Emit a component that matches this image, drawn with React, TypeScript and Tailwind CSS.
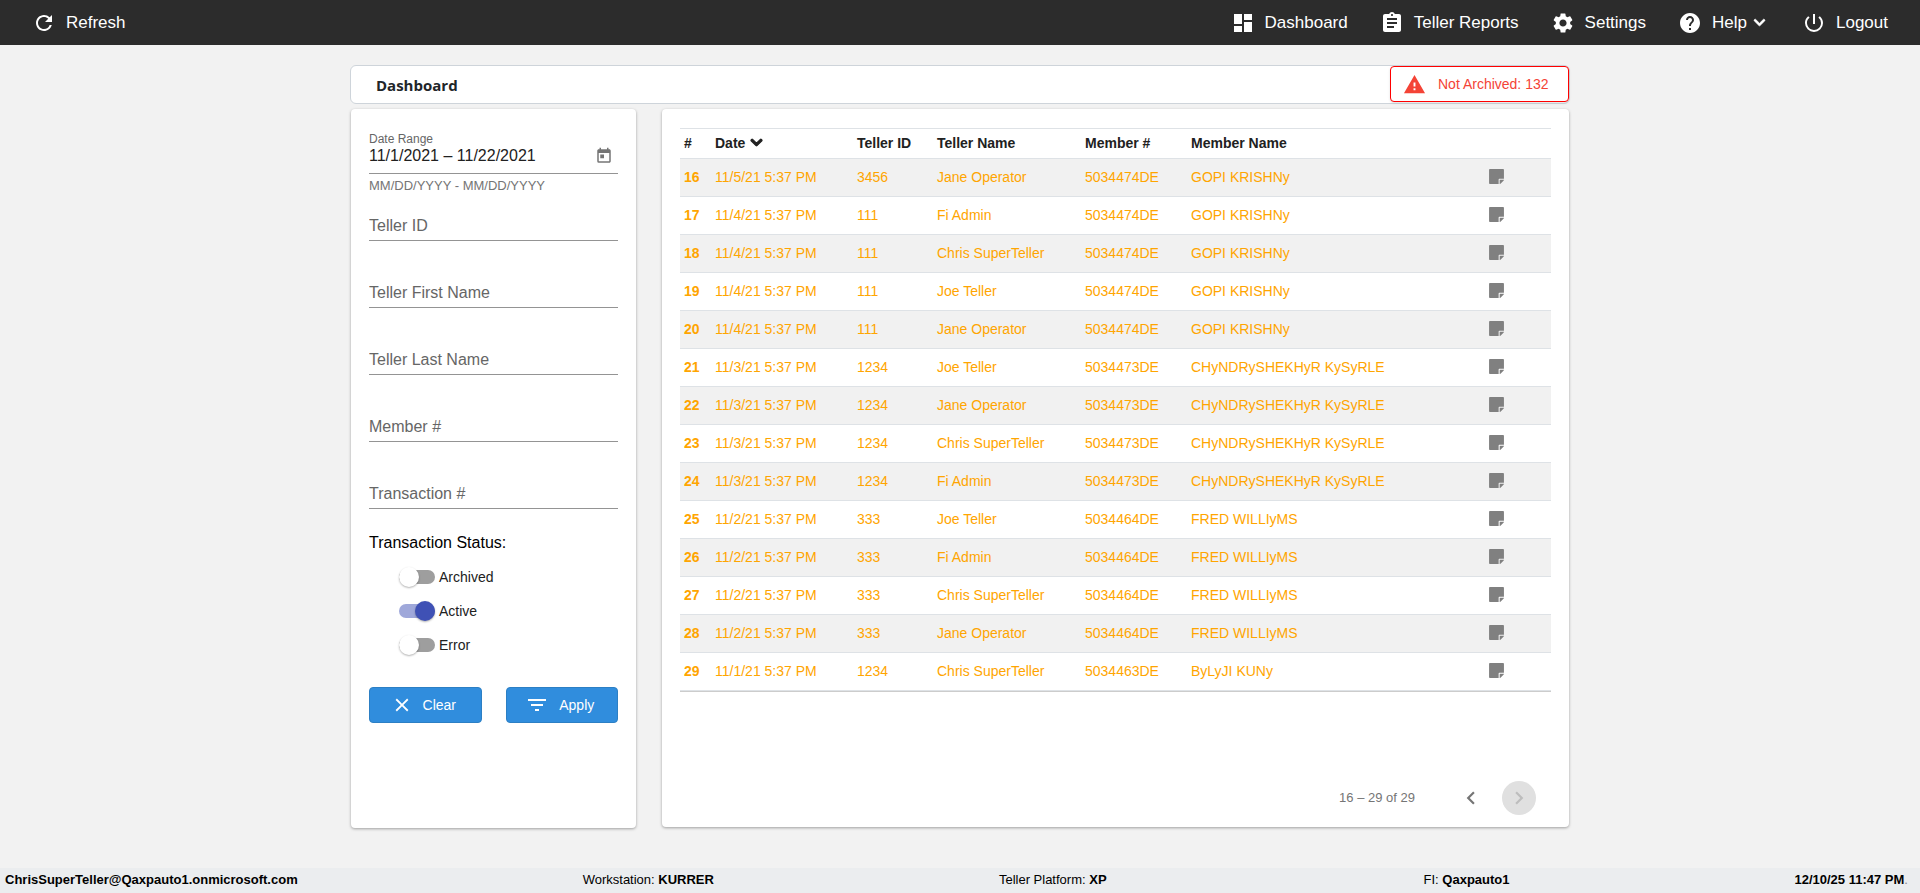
import { useState } from 'react';
import type { ReactNode } from 'react';
import { FaChevronDown, FaStickyNote } from 'react-icons/fa';
import {
  MdAssignment,
  MdChevronLeft,
  MdChevronRight,
  MdClose,
  MdDashboard,
  MdFilterList,
  MdHelp,
  MdPowerSettingsNew,
  MdRefresh,
  MdSettings,
  MdToday,
  MdWarning,
} from 'react-icons/md';

interface Transaction {
  id: number;
  date: string;
  tellerId: string;
  tellerName: string;
  memberNumber: string;
  memberName: string;
}

const transactions: Transaction[] = [
  { id: 16, date: '11/5/21 5:37 PM', tellerId: '3456', tellerName: 'Jane Operator', memberNumber: '5034474DE', memberName: 'GOPI KRISHNy' },
  { id: 17, date: '11/4/21 5:37 PM', tellerId: '111', tellerName: 'Fi Admin', memberNumber: '5034474DE', memberName: 'GOPI KRISHNy' },
  { id: 18, date: '11/4/21 5:37 PM', tellerId: '111', tellerName: 'Chris SuperTeller', memberNumber: '5034474DE', memberName: 'GOPI KRISHNy' },
  { id: 19, date: '11/4/21 5:37 PM', tellerId: '111', tellerName: 'Joe Teller', memberNumber: '5034474DE', memberName: 'GOPI KRISHNy' },
  { id: 20, date: '11/4/21 5:37 PM', tellerId: '111', tellerName: 'Jane Operator', memberNumber: '5034474DE', memberName: 'GOPI KRISHNy' },
  { id: 21, date: '11/3/21 5:37 PM', tellerId: '1234', tellerName: 'Joe Teller', memberNumber: '5034473DE', memberName: 'CHyNDRySHEKHyR KySyRLE' },
  { id: 22, date: '11/3/21 5:37 PM', tellerId: '1234', tellerName: 'Jane Operator', memberNumber: '5034473DE', memberName: 'CHyNDRySHEKHyR KySyRLE' },
  { id: 23, date: '11/3/21 5:37 PM', tellerId: '1234', tellerName: 'Chris SuperTeller', memberNumber: '5034473DE', memberName: 'CHyNDRySHEKHyR KySyRLE' },
  { id: 24, date: '11/3/21 5:37 PM', tellerId: '1234', tellerName: 'Fi Admin', memberNumber: '5034473DE', memberName: 'CHyNDRySHEKHyR KySyRLE' },
  { id: 25, date: '11/2/21 5:37 PM', tellerId: '333', tellerName: 'Joe Teller', memberNumber: '5034464DE', memberName: 'FRED WILLIyMS' },
  { id: 26, date: '11/2/21 5:37 PM', tellerId: '333', tellerName: 'Fi Admin', memberNumber: '5034464DE', memberName: 'FRED WILLIyMS' },
  { id: 27, date: '11/2/21 5:37 PM', tellerId: '333', tellerName: 'Chris SuperTeller', memberNumber: '5034464DE', memberName: 'FRED WILLIyMS' },
  { id: 28, date: '11/2/21 5:37 PM', tellerId: '333', tellerName: 'Jane Operator', memberNumber: '5034464DE', memberName: 'FRED WILLIyMS' },
  { id: 29, date: '11/1/21 5:37 PM', tellerId: '1234', tellerName: 'Chris SuperTeller', memberNumber: '5034463DE', memberName: 'ByLyJI KUNy' },
];

const textFilters = ['Teller ID', 'Teller First Name', 'Teller Last Name', 'Member #', 'Transaction #'];

function NavButton({ icon, children }: { icon: ReactNode; children: ReactNode }) {
  return (
    <button type="button" className="flex items-center gap-2.5 text-[17px] leading-6 text-white">
      {icon}
      <span className="flex items-center gap-1.5">{children}</span>
    </button>
  );
}

function TopBar() {
  return (
    <header className="flex h-[45px] items-center justify-between bg-[#2c2c2c] px-8">
      <NavButton icon={<MdRefresh size={24} />}>Refresh</NavButton>
      <div className="flex items-center gap-9">
        <nav className="flex items-center gap-8">
          <NavButton icon={<MdDashboard size={24} />}>Dashboard</NavButton>
          <NavButton icon={<MdAssignment size={24} />}>Teller Reports</NavButton>
          <NavButton icon={<MdSettings size={24} />}>Settings</NavButton>
          <NavButton icon={<MdHelp size={24} />}>
            Help <FaChevronDown size={13} strokeWidth={24} className="overflow-visible" />
          </NavButton>
        </nav>
        <NavButton icon={<MdPowerSettingsNew size={24} />}>Logout</NavButton>
      </div>
    </header>
  );
}

function StatusToggle({ label, defaultChecked = false }: { label: string; defaultChecked?: boolean }) {
  return (
    <label className="flex h-[34px] items-center gap-1 text-sm text-[#212121]">
      <input
        type="checkbox"
        defaultChecked={defaultChecked}
        className="h-3.5 w-9 appearance-none rounded-full bg-[#9e9e9e] before:-mt-[3px] before:block before:size-5 before:rounded-full before:bg-white before:shadow-[0_1px_2px_rgba(0,0,0,0.3)] checked:bg-[#9fa8da] checked:before:ml-4 checked:before:bg-[#3f51b5]"
      />
      {label}
    </label>
  );
}

function FilterPanel() {
  const [dateRange, setDateRange] = useState('11/1/2021 – 11/22/2021');

  return (
    <form className="w-[285px] shrink-0 rounded bg-white px-[18px] pt-[21px] shadow-[0_1px_3px_rgba(0,0,0,0.35)]">
      <label htmlFor="date-range" className="block pt-0.5 text-xs leading-[14px] text-[#666]">
        Date Range
      </label>
      <div className="flex h-7 items-start border-b border-[#949494]">
        <input
          id="date-range"
          value={dateRange}
          onChange={(e) => setDateRange(e.target.value)}
          className="min-w-0 flex-1 text-base leading-5 text-[#212121] outline-none"
        />
        <button type="button" aria-label="Open calendar" className="mt-px mr-[5px] text-[#757575]">
          <MdToday size={18} />
        </button>
      </div>
      <p className="pt-1 text-[13px] leading-4 text-[#757575]">MM/DD/YYYY - MM/DD/YYYY</p>

      <div className="mt-[18px] flex flex-col gap-[38px]">
        {textFilters.map((label) => (
          <input
            key={label}
            aria-label={label}
            placeholder={label}
            className="h-[29px] w-full border-b border-[#949494] text-base leading-6 outline-none placeholder:text-[#666]"
          />
        ))}
      </div>

      <fieldset className="mt-[22px]">
        <legend className="mb-[5px] text-base leading-6 text-black">Transaction Status:</legend>
        <div className="pl-[30px]">
          <StatusToggle label="Archived" />
          <StatusToggle label="Active" defaultChecked />
          <StatusToggle label="Error" />
        </div>
      </fieldset>

      <div className="mt-[25px] grid grid-cols-2 gap-6">
        <button type="reset" className="flex h-9 items-center justify-center gap-2.5 rounded-sm border border-[#2c7fc4] bg-[#308ddd] pr-1 text-sm text-white">
          <MdClose size={22} /> Clear
        </button>
        <button type="button" className="flex h-9 items-center justify-center gap-2.5 rounded-sm border border-[#2c7fc4] bg-[#308ddd] pr-1 text-sm text-white">
          <MdFilterList size={24} /> Apply
        </button>
      </div>
    </form>
  );
}

function TransactionTable() {
  return (
    <table className="w-full table-fixed border-separate border-spacing-0 border-b border-[#dee2e6] text-left text-sm shadow-[0_1px_0_rgba(0,0,0,0.2)]">
      <thead>
        <tr className="h-[30px] text-[#212121] *:border-t *:border-[#dee2e6] *:px-1 *:pb-0.5 *:font-bold">
          <th className="w-[31px]">#</th>
          <th className="w-[142px]">
            <button type="button" className="flex items-center gap-[5px]">
              Date <FaChevronDown size={13} strokeWidth={48} className="overflow-visible" />
            </button>
          </th>
          <th className="w-[80px]">Teller ID</th>
          <th className="w-[148px]">Teller Name</th>
          <th className="w-[106px]">Member #</th>
          <th>Member Name</th>
          <th className="w-[67px]"></th>
        </tr>
      </thead>
      <tbody>
        {transactions.map((row) => (
          <tr key={row.id} className="h-[38px] text-[#ffa500] odd:bg-[#f1f1f1] *:border-t *:border-[#dee2e6] *:px-1 *:pb-0.5">
            <th className="font-bold">{row.id}</th>
            <td>{row.date}</td>
            <td>{row.tellerId}</td>
            <td>{row.tellerName}</td>
            <td>{row.memberNumber}</td>
            <td>{row.memberName}</td>
            <td>
              <button type="button" aria-label="Notes" className="block text-[#808080]">
                <FaStickyNote size={17} />
              </button>
            </td>
          </tr>
        ))}
      </tbody>
    </table>
  );
}

function Paginator() {
  return (
    <div className="mt-auto mb-3 flex items-center justify-end pr-[15px] text-[13px] text-[#757575]">
      <span className="mr-[39px]">16 – 29 of 29</span>
      <button type="button" aria-label="Previous page" className="mr-3.5 flex size-[34px] items-center justify-center">
        <MdChevronLeft size={26} />
      </button>
      <button type="button" aria-label="Next page" disabled className="flex size-[34px] items-center justify-center rounded-full bg-[#e0e0e0] text-[#bdbdbd]">
        <MdChevronRight size={26} />
      </button>
    </div>
  );
}

function StatusBar() {
  return (
    <footer className="flex h-[25px] items-center justify-between bg-[#ebedef] pr-3 pb-0.5 pl-[5px] text-[13px] text-black">
      <strong>ChrisSuperTeller@Qaxpauto1.onmicrosoft.com</strong>
      <span>
        Workstation: <strong>KURRER</strong>
      </span>
      <span className="pr-8">
        Teller Platform: <strong>XP</strong>
      </span>
      <span>
        FI: <strong>Qaxpauto1</strong>
      </span>
      <span>
        <strong>12/10/25 11:47 PM</strong>
        <span className="text-[#888]">.</span>
      </span>
    </footer>
  );
}

export default function App() {
  return (
    <div className="flex min-h-screen flex-col bg-[#f2f2f2] font-['Liberation_Sans',Arial,sans-serif]">
      <TopBar />
      <main className="mx-auto flex w-full max-w-[1220px] flex-1 flex-col pt-5 pb-10">
        <div className="flex h-[39px] items-start justify-between rounded-md border border-[#ced4da] bg-white pl-[25px]">
          <h1 className="font-['Open_Sans','Noto_Sans',sans-serif] text-[15px] leading-[38px] font-bold text-[#212529]">Dashboard</h1>
          <button type="button" className="flex h-9 w-[179px] items-center gap-3 rounded-sm border border-[#f00] bg-white pl-3 text-sm text-[#f44336] shadow-sm">
            <MdWarning size={23} />
            Not Archived: 132
          </button>
        </div>
        <div className="mt-[5px] flex flex-1 gap-[26px] px-px">
          <FilterPanel />
          <section className="mb-px flex min-w-0 flex-1 flex-col rounded bg-white px-[18px] pt-[19px] shadow-[0_1px_3px_rgba(0,0,0,0.35)]">
            <TransactionTable />
            <Paginator />
          </section>
        </div>
      </main>
      <StatusBar />
    </div>
  );
}
